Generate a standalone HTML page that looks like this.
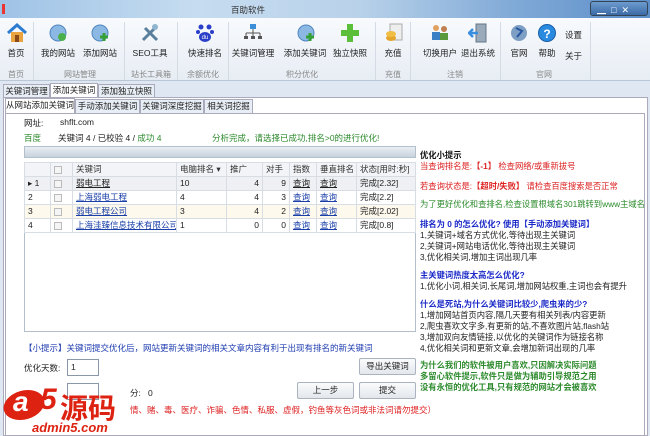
<!DOCTYPE html>
<html><head><meta charset="utf-8"><style>
*{margin:0;padding:0;box-sizing:border-box}
body{width:650px;height:436px;overflow:hidden;background:#dfe8f2;font-family:"Liberation Sans","Noto Sans CJK SC",sans-serif;font-size:8.5px;color:#222;position:relative}
.a{position:absolute;white-space:nowrap}
.ic{position:absolute;width:20px;height:20px;top:23px}
.lb{position:absolute;top:47px;font-size:8.5px;color:#222;transform:translateX(-50%);white-space:nowrap}
.gl{position:absolute;top:69px;font-size:8px;color:#888;transform:translateX(-50%);white-space:nowrap}
.sep{position:absolute;top:22px;width:1px;height:58px;background:#d4dbe4}
.tab{position:absolute;height:14px;border:1px solid #aab;border-bottom:none;background:#e8eef5;font-size:8.5px;line-height:13px;text-align:center;white-space:nowrap;overflow:hidden}
table{border-collapse:collapse;position:absolute;left:24px;top:162px;font-size:8.5px;table-layout:fixed;width:391px}
td{border:1px solid #d8dde4;height:14px;padding:0 3px;line-height:13px;white-space:nowrap;overflow:hidden}
.hd td{background:#f2f4f7;color:#333}
.lnk{color:#1a3fa8;text-decoration:underline}
.r{text-align:right}
.cb{display:inline-block;width:8px;height:8px;border:1px solid #bbb;background:#f5f5f5;vertical-align:middle}
.tip div{position:absolute;left:0;white-space:nowrap;font-size:8.3px}
.btn{position:absolute;height:17px;border:1px solid #aab3bf;border-radius:2px;background:linear-gradient(#fafbfc,#e3e7ec);text-align:center;line-height:15px;font-size:8.5px}
</style></head><body>
<div class="a" style="left:0;top:0;width:650px;height:18px;background:linear-gradient(90deg,#9fc3e6,#c6dcf0 30%,#b9d2ea 55%,#7ea8d6 80%,#5d8ec8)"></div>
<div class="a" style="left:2px;top:4px;width:3px;height:10px;background:#e33"></div>
<div class="a" style="left:231px;top:4px;font-size:8.5px;color:#333">百助软件</div>
<div class="a" style="left:590px;top:1px;width:58px;height:15px;border-radius:3px;background:linear-gradient(#6d9ccf,#3c6aa6);border:1px solid #345"></div>
<div class="a" style="left:597px;top:3px;color:#fff;font-size:9px">▁ &nbsp;□ &nbsp;✕</div>
<div class="a" style="left:0;top:18px;width:650px;height:63px;background:linear-gradient(#f8fafd,#e7edf4);border-bottom:1px solid #b8c6d6"></div>
<svg class="ic" style="left:7px" viewBox="0 0 20 20"><path d="M1 10 L10 2 L19 10" fill="none" stroke="#2b7bd0" stroke-width="3"/><rect x="4" y="9" width="12" height="10" fill="#e9a43f"/><rect x="8" y="12" width="4" height="7" fill="#8a4a18"/></svg>
<div class="lb" style="left:16px">首页</div>
<div class="sep" style="left:33px"></div>
<svg class="ic" style="left:48px" viewBox="0 0 20 20"><circle cx="10" cy="10" r="8" fill="#8cb9e3" stroke="#4f86bf"/><circle cx="14" cy="14" r="4" fill="#4bb04b"/></svg>
<div class="lb" style="left:58px">我的网站</div>
<svg class="ic" style="left:90px" viewBox="0 0 20 20"><circle cx="10" cy="10" r="8" fill="#8cb9e3" stroke="#4f86bf"/><path d="M14 10v8M10 14h8" stroke="#35a035" stroke-width="3"/></svg>
<div class="lb" style="left:100px">添加网站</div>
<div class="sep" style="left:124px"></div>
<svg class="ic" style="left:140px" viewBox="0 0 20 20"><path d="M3 17L15 5M5 5l12 12" stroke="#5a7f9e" stroke-width="3"/><circle cx="15" cy="4" r="3" fill="#8fb4cf"/></svg>
<div class="lb" style="left:150px">SEO工具</div>
<div class="sep" style="left:177px"></div>
<svg class="ic" style="left:195px" viewBox="0 0 20 20"><circle cx="6" cy="4" r="2.5" fill="#2a3fc9"/><circle cx="14" cy="4" r="2.5" fill="#2a3fc9"/><circle cx="3" cy="9" r="2" fill="#2a3fc9"/><circle cx="17" cy="9" r="2" fill="#2a3fc9"/><ellipse cx="10" cy="14" rx="6" ry="5" fill="#2a3fc9"/><text x="10" y="16" font-size="6" fill="#fff" text-anchor="middle">du</text></svg>
<div class="lb" style="left:205px">快速排名</div>
<div class="sep" style="left:228px"></div>
<svg class="ic" style="left:243px" viewBox="0 0 20 20"><rect x="7" y="1" width="6" height="5" fill="#3b8fd8"/><path d="M10 6v4M3 10h14M3 10v3M10 10v3M17 10v3" stroke="#555"/><rect x="1" y="13" width="4" height="3" fill="#555"/><rect x="8" y="13" width="4" height="3" fill="#555"/><rect x="15" y="13" width="4" height="3" fill="#555"/></svg>
<div class="lb" style="left:253px">关键词管理</div>
<svg class="ic" style="left:296px" viewBox="0 0 20 20"><circle cx="10" cy="10" r="8" fill="#8cb9e3" stroke="#4f86bf"/><path d="M14 10v8M10 14h8" stroke="#35a035" stroke-width="3"/></svg>
<div class="lb" style="left:305px">添加关键词</div>
<svg class="ic" style="left:340px" viewBox="0 0 20 20"><path d="M7 1h6v6h6v6h-6v6H7v-6H1V7h6z" fill="#5cbf3a"/></svg>
<div class="lb" style="left:350px">独立快照</div>
<div class="sep" style="left:375px"></div>
<svg class="ic" style="left:384px" viewBox="0 0 20 20"><rect x="6" y="1" width="12" height="16" fill="#eee" stroke="#aaa"/><ellipse cx="7" cy="15" rx="5" ry="3" fill="#e3a52b"/><ellipse cx="7" cy="11" rx="5" ry="3" fill="#f0bd45"/></svg>
<div class="lb" style="left:393px">充值</div>
<div class="sep" style="left:410px"></div>
<svg class="ic" style="left:430px" viewBox="0 0 20 20"><circle cx="6" cy="5" r="3" fill="#e0a060"/><circle cx="14" cy="6" r="3" fill="#c08050"/><rect x="2" y="9" width="8" height="8" fill="#3b7fc4"/><rect x="10" y="10" width="8" height="7" fill="#5a9a3a"/></svg>
<div class="lb" style="left:440px">切换用户</div>
<svg class="ic" style="left:468px" viewBox="0 0 20 20"><rect x="8" y="1" width="10" height="18" fill="#9ab" stroke="#678"/><path d="M1 10h9M5 6l-4 4 4 4" stroke="#3a8ee0" stroke-width="2.5" fill="none"/></svg>
<div class="lb" style="left:478px">退出系统</div>
<div class="sep" style="left:500px"></div>
<svg class="ic" style="left:509px" viewBox="0 0 20 20"><circle cx="10" cy="10" r="8" fill="#7d9fc4"/><path d="M7 5l6 3-5 6" stroke="#2956a0" stroke-width="2" fill="none"/></svg>
<div class="lb" style="left:519px">官网</div>
<svg class="ic" style="left:537px" viewBox="0 0 20 20"><circle cx="10" cy="10" r="8.5" fill="#2a8ae0" stroke="#1a5fa8"/><text x="10" y="15" font-size="12" font-weight="bold" fill="#fff" text-anchor="middle">?</text></svg>
<div class="lb" style="left:547px">帮助</div>
<div class="a" style="left:565px;top:29px">设置</div>
<div class="a" style="left:565px;top:50px">关于</div>
<div class="sep" style="left:590px"></div>
<div class="gl" style="left:16px">首页</div>
<div class="gl" style="left:80px">网站管理</div>
<div class="gl" style="left:151px">站长工具箱</div>
<div class="gl" style="left:203px">余额优化</div>
<div class="gl" style="left:302px">积分优化</div>
<div class="gl" style="left:393px">充值</div>
<div class="gl" style="left:455px">注销</div>
<div class="gl" style="left:544px">官网</div>
<div class="tab" style="left:3px;top:84px;width:47px">关键词管理</div>
<div class="tab" style="left:50px;top:83px;width:48px;background:#fff;height:15px">添加关键词</div>
<div class="tab" style="left:98px;top:84px;width:57px">添加独立快照</div>
<div class="a" style="left:3px;top:97px;width:645px;height:339px;background:#fff;border:1px solid #aab"></div>
<div class="tab" style="left:5px;top:98px;width:70px;background:#fff;height:15px">从网站添加关键词</div>
<div class="tab" style="left:75px;top:99px;width:65px">手动添加关键词</div>
<div class="tab" style="left:140px;top:99px;width:64px">关键词深度挖掘</div>
<div class="tab" style="left:204px;top:99px;width:49px">相关词挖掘</div>
<div class="a" style="left:5px;top:113px;width:640px;height:323px;background:#fff;border:1px solid #aab"></div>
<div class="a" style="left:24px;top:117px">网址:</div>
<div class="a" style="left:60px;top:117px">shflt.com</div>
<div class="a" style="left:24px;top:132px;color:#2c8a2c">百度</div>
<div class="a" style="left:58px;top:132px">关键词 4 / 已校验 4 / <span style="color:#2c8a2c">成功 4</span></div>
<div class="a" style="left:212px;top:132px;color:#2c8a2c">分析完成，请选择已成功,排名&gt;0的进行优化!</div>
<div class="a" style="left:24px;top:146px;width:392px;height:12px;background:linear-gradient(#e8eef4,#c8d2dd);border:1px solid #b4bfcc"></div>
<div class="a" style="left:24px;top:162px;width:392px;height:170px;border:1px solid #b4bfcc"></div>
<table>
<colgroup><col style="width:26px"><col style="width:22px"><col style="width:104px"><col style="width:50px"><col style="width:36px"><col style="width:27px"><col style="width:27px"><col style="width:40px"><col style="width:59px"></colgroup>
<tr class="hd"><td></td><td><span class="cb"></span></td><td>关键词</td><td>电脑排名 ▾</td><td>推广</td><td>对手</td><td>指数</td><td>垂直排名</td><td>状态[用时:秒]</td></tr>
<tr style="background:#eef0f3"><td>▸ 1</td><td><span class="cb"></span></td><td><span style="text-decoration:underline">弱电工程</span></td><td>10</td><td class="r">4</td><td class="r">9</td><td><span style="text-decoration:underline">查询</span></td><td><span style="text-decoration:underline">查询</span></td><td>完成[2.32]</td></tr>
<tr><td>2</td><td><span class="cb"></span></td><td><span class="lnk">上海弱电工程</span></td><td>4</td><td class="r">4</td><td class="r">3</td><td><span class="lnk">查询</span></td><td><span class="lnk">查询</span></td><td>完成[2.2]</td></tr>
<tr style="background:#fdf9ec"><td>3</td><td><span class="cb"></span></td><td><span class="lnk">弱电工程公司</span></td><td>3</td><td class="r">4</td><td class="r">2</td><td><span class="lnk">查询</span></td><td><span class="lnk">查询</span></td><td>完成[2.02]</td></tr>
<tr><td>4</td><td><span class="cb"></span></td><td><span class="lnk">上海洼臻信息技术有限公司</span></td><td>1</td><td class="r">0</td><td class="r">0</td><td><span class="lnk">查询</span></td><td><span class="lnk">查询</span></td><td>完成[0.8]</td></tr>
</table>
<div class="a" style="left:24px;top:342px;color:#1f3db0">【小提示】关键词提交优化后，网站更新关键词的相关文章内容有利于出现有排名的新关键词</div>
<div class="a" style="left:24px;top:362px">优化天数:</div>
<div class="a" style="left:67px;top:359px;width:32px;height:17px;border:1px solid #8a97a8;padding:2px 3px">1</div>
<div class="btn" style="left:359px;top:358px;width:57px">导出关键词</div>
<div class="a" style="left:67px;top:383px;width:32px;height:17px;border:1px solid #8a97a8"></div>
<div class="a" style="left:130px;top:387px">分: &nbsp; 0</div>
<div class="btn" style="left:297px;top:382px;width:57px">上一步</div>
<div class="btn" style="left:359px;top:382px;width:57px">提交</div>
<div class="a" style="left:130px;top:404px;color:#d22">情、赌、毒、医疗、诈骗、色情、私服、虚假，钓鱼等灰色词或非法词请勿提交）</div>
<div class="a" style="left:4px;top:390px;width:40px;height:30px;border-radius:50%;background:#d21;transform:skewX(-15deg)"></div>
<div class="a" style="left:13px;top:386px;font-size:28px;font-weight:bold;font-style:italic;color:#fff">a</div>
<div class="a" style="left:40px;top:383px;font-size:30px;font-weight:bold;font-style:italic;color:#d21">5</div>
<div class="a" style="left:60px;top:387px;font-size:28px;font-weight:bold;color:#d21">源码</div>
<div class="a" style="left:32px;top:420px;font-size:13px;font-weight:bold;font-style:italic;color:#d21">admin5.com</div>
<div class="a tip" style="left:420px;top:0">
<div style="top:149px;font-weight:bold;color:#111">优化小提示</div>
<div style="top:160px;color:#d22">当查询排名是:<b>【-1】</b> 检查网络/或重新拔号</div>
<div style="top:180px;color:#d22">若查询状态是:<b>【超时/失败】</b> 请检查百度搜索是否正常</div>
<div style="top:198px;color:#2c8a2c">为了更好优化和查排名,检查设置根域名301跳转到www主域名</div>
<div style="top:218px;color:#1a28c8;font-weight:bold">排名为 0 的怎么优化? 使用【手动添加关键词】</div>
<div style="top:229px">1,关键词+域名方式优化,等待出现主关键词</div>
<div style="top:240px">2,关键词+网站电话优化,等待出现主关键词</div>
<div style="top:251px">3,优化相关词,增加主词出现几率</div>
<div style="top:269px;color:#1a28c8;font-weight:bold">主关键词热度太高怎么优化?</div>
<div style="top:280px">1,优化小词,相关词,长尾词,增加网站权重,主词也会有提升</div>
<div style="top:298px;color:#1a28c8;font-weight:bold">什么是死站,为什么关键词比较少,爬虫来的少?</div>
<div style="top:309px">1,增加网站首页内容,隔几天要有相关列表/内容更新</div>
<div style="top:320px">2,爬虫喜欢文字多,有更新的站,不喜欢图片站,flash站</div>
<div style="top:331px">3,增加双向友情链接,以优化的关键词作为链接名称</div>
<div style="top:342px">4,优化相关词和更新文章,会增加新词出现的几率</div>
<div style="top:359px;color:#2c8a2c;font-weight:bold">为什么我们的软件被用户喜欢,只因解决实际问题</div>
<div style="top:370px;color:#2c8a2c;font-weight:bold">多留心软件提示,软件只是做为辅助引导规范之用</div>
<div style="top:381px;color:#2c8a2c;font-weight:bold">没有永恒的优化工具,只有规范的网站才会被喜欢</div>
</div>
</body></html>
